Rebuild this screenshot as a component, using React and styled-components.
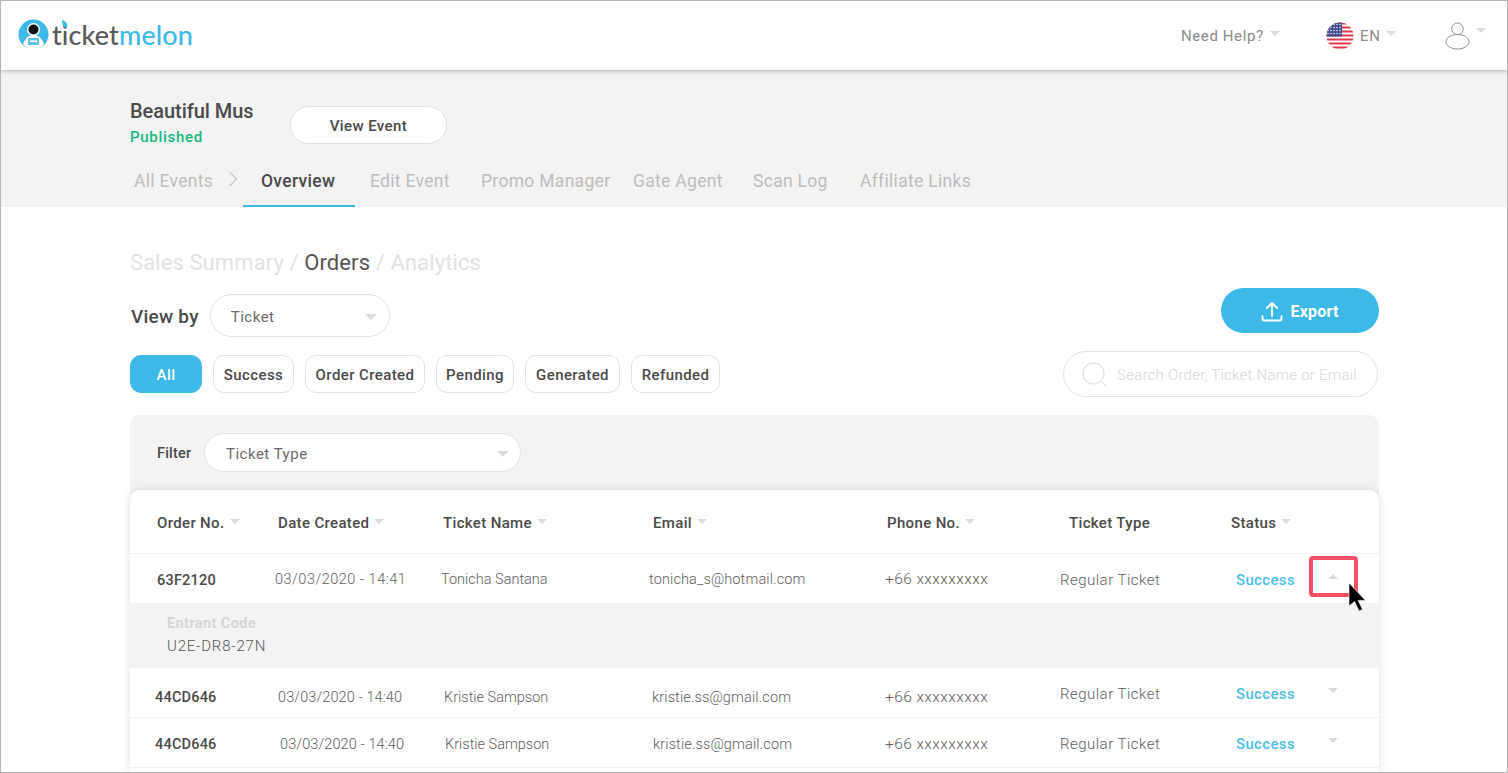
import React from "react";
import styled, { createGlobalStyle } from "styled-components";

const Global = createGlobalStyle`
  html, body { margin: 0; padding: 0; background: #fff; overflow: hidden; }
  * { box-sizing: border-box; }
  body { font-family: Roboto, "Noto Sans", Arial, sans-serif; color: #4a4a4a; }
`;

const Frame = styled.div`
  width: 1508px; height: 773px; border: 1px solid #b5b5b5; overflow: hidden; background: #fff; display: flex; flex-direction: column;
`;
const Header = styled.header`
  height: 69px; flex: none; display: flex; align-items: center; justify-content: space-between;
  padding: 0 21px 0 17px; background: #fff; box-shadow: 0 1px 4px rgba(0,0,0,.28); position: relative; z-index: 2;
`;
const LogoWrap = styled.div` display: flex; align-items: center; gap: 3px; position: relative; top: -1px; `;
const LogoText = styled.div`
  font-family: Lato, "Open Sans", sans-serif; font-size: 27px; font-weight: 500; color: #58595b; letter-spacing: .1px; position: relative; line-height: 30px;
  span { color: #3cb9e6; }
`;
const LeafDot = styled.svg` position: absolute; left: 9px; top: 0; `;
const HeaderRight = styled.div` display: flex; align-items: center; `;
const HeaderItem = styled.div`
  display: flex; align-items: center; gap: ${p => p.$gap || 6}px; width: ${p => p.$w}px; font-size: 15px; color: #8c8c8c; letter-spacing: .6px;
`;
const Caret = styled.i`
  display: inline-block; flex: none; width: 0; height: 0; border-left: ${p => p.$s || 5}px solid transparent; border-right: ${p => p.$s || 5}px solid transparent;
  ${p => p.$up ? "border-bottom" : "border-top"}: ${p => p.$s || 5}px solid ${p => p.$c || "#dcdcdc"};
  position: relative; top: ${p => p.$t || 0}px;
`;
const Band = styled.section` height: 137px; flex: none; background: #f3f3f3; padding: 27px 0 0 129px; `;
const TitleRow = styled.div` display: flex; align-items: flex-start; gap: 36px; height: 51px; `;
const TitleCol = styled.div` display: flex; flex-direction: column; gap: 1px; width: 124px; `;
const EventName = styled.div` font-size: 20px; font-weight: 500; color: #4a4a4a; line-height: 28px; letter-spacing: -.05px; `;
const Published = styled.div` font-size: 15px; font-weight: 500; color: #12b981; line-height: 22px; letter-spacing: .7px; `;
const ViewButton = styled.button`
  width: 157px; height: 38px; margin-top: 9px; padding: 2px 0 0; border-radius: 19px; background: #fff; border: 1px solid #e1e1e1; font: 500 15px Roboto, sans-serif; color: #4a4a4a; letter-spacing: .4px;
`;
const Nav = styled.nav` display: flex; align-items: center; height: 36px; margin-top: 23px; padding-left: 4px; `;
const Tab = styled.div`
  width: ${p => p.$w}px; flex: none; height: 36px; font-size: 17.5px; line-height: 25px; letter-spacing: .3px;
  color: ${p => p.$active ? "#4a4a4a" : "#bdbdbd"}; font-weight: ${p => p.$active ? 500 : 400};
  padding-left: ${p => p.$pl || 0}px; white-space: nowrap; display: flex; align-items: center;
  ${p => p.$active ? "border-bottom: 2px solid #3cb9e6; padding-bottom: 14px;" : "padding-bottom: 16px;"}
`;
const Chevron = styled.svg` flex: none; margin-right: 5px; position: relative; top: -10px; `;
const Content = styled.main` flex: 1; padding: 0 128px 0 129px; min-height: 0; `;
const Breadcrumb = styled.div` margin-top: 42px; height: 28px; font-size: 22px; line-height: 28px; color: #e2e2e2; letter-spacing: .1px; span { color: #555; } `;
const Toolbar = styled.div` display: flex; justify-content: space-between; `;
const ToolLeft = styled.div` display: flex; flex-direction: column; padding-top: 17px; `;
const ToolRight = styled.div` display: flex; flex-direction: column; align-items: flex-end; padding-top: 11px; `;
const ViewRow = styled.div` display: flex; align-items: center; gap: 11px; height: 43px; `;
const ViewLabel = styled.div` font-size: 19px; font-weight: 500; letter-spacing: .25px; color: #4a4a4a; margin-left: 1px; padding-top: 1px; `;
const Select = styled.div`
  width: ${p => p.$w}px; height: ${p => p.$h}px; border: 1px solid #e3e3e3; border-radius: ${p => p.$h / 2}px; background: #fff;
  display: flex; align-items: center; justify-content: space-between; padding: 2px ${p => p.$pr}px 0 ${p => p.$pl}px;
  font-size: 15px; color: #6a6a6a; letter-spacing: .5px;
`;
const Chips = styled.div` display: flex; gap: 11px; margin-top: 18px; `;
const Chip = styled.div`
  width: ${p => p.$w}px; height: 38px; padding-top: 2px; border-radius: 11px; display: flex; align-items: center; justify-content: center; font-size: 15px; font-weight: 500; letter-spacing: .4px;
  background: ${p => p.$active ? "#3cb9e6" : "#fff"}; color: ${p => p.$active ? "#fff" : "#4a4a4a"}; border: 1px solid ${p => p.$active ? "#3cb9e6" : "#e3e3e3"};
`;
const ExportButton = styled.button`
  width: 158px; height: 45px; border: 0; border-radius: 23px; background: #3cb9e6; color: #fff; font: 700 16px Roboto, sans-serif; letter-spacing: .2px; padding: 2px 0 0;
  display: flex; align-items: center; justify-content: center; gap: 7px;
`;
const Search = styled.div`
  width: 315px; height: 46px; margin-top: 18px; margin-right: 1px; border: 1px solid #e3e3e3; border-radius: 23px; display: flex; align-items: center; gap: 9px; padding: 2px 0 0 18px;
  font-size: 15px; color: #d6d6d6; letter-spacing: .25px; white-space: nowrap; font-weight: 300;
`;
const Panel = styled.section` margin-top: 18px; background: #f3f3f3; border-radius: 10px 10px 0 0; `;
const FilterRow = styled.div` display: flex; align-items: center; height: 75px; padding: 0 0 0 27px; `;
const FilterLabel = styled.div` width: 47px; font-size: 14.5px; font-weight: 500; letter-spacing: .2px; padding-top: 2px; `;
const Card = styled.div` background: #fff; border-radius: 10px 10px 0 0; box-shadow: 0 0 8px rgba(0,0,0,.12); min-height: 340px; `;
const HeadRow = styled.div`
  display: grid; grid-template-columns: ${p => p.$cols}; height: 64px; align-items: center; border-bottom: 1px solid #f0f0f0; padding-left: 27px; padding-top: 2px;
`;
const HeadCell = styled.div` display: flex; align-items: center; gap: 5px; font-size: 15px; font-weight: 500; letter-spacing: .35px; color: #4a4a4a; white-space: nowrap; `;
const Row = styled.div`
  display: grid; grid-template-columns: ${p => p.$cols}; height: ${p => p.$h || 49}px; align-items: center; padding-left: ${p => p.$pl}px; border-bottom: ${p => p.$line ? "1px solid #f0f0f0" : "0"};
`;
const Cell = styled.div`
  font-size: ${p => p.$fs || 14.5}px; letter-spacing: ${p => p.$ls ?? .2}px; color: #5e5e5e; white-space: nowrap; font-weight: 300; position: relative; top: ${p => p.$t || 0}px;
`;
const OrderCell = styled(Cell)` font-weight: 500; color: #4a4a4a; `;
const StatusCell = styled.div` font-size: 15px; font-weight: 500; color: #4dbdea; letter-spacing: .35px; position: relative; top: ${p => p.$t || 0}px; `;
const CaretCell = styled.div` position: relative; display: flex; padding-left: 19px; top: ${p => p.$t || 0}px; `;
const Annotation = styled.div`
  position: absolute; left: 0; top: -18px; width: 49px; height: 41px; border: 4px solid #f54f66; border-radius: 4px; pointer-events: none;
`;
const Pointer = styled.svg` position: absolute; left: 39px; top: 8px; z-index: 3; `;
const Expanded = styled.div` height: 65px; background: #f3f3f3; padding: 12px 0 0 37px; `;
const ExpandedLabel = styled.div` font-size: 14.5px; font-weight: 700; color: #d6d6d6; line-height: 18px; letter-spacing: .4px; `;
const ExpandedValue = styled.div` font-size: 15px; font-weight: 300; color: #555; line-height: 26px; letter-spacing: .8px; `;

const Logo = () => (
  <LogoWrap>
    <svg width="31" height="31" viewBox="0 0 31 31">
      <circle cx="15.5" cy="15.5" r="15" fill="#3cb9e6" />
      <path d="M5 25c3-7 6-9 10.500-9S23 18 26 25c-3 4-6.500 6-10.500 6S8 29 5 25z" fill="#fff" />
      <circle cx="15.500" cy="10.500" r="6.500" fill="#fff" />
      <circle cx="15.500" cy="10.500" r="5" fill="#111" />
      <rect x="10" y="19" width="11" height="7" rx="1" fill="#5cc4ea" />
      <rect x="12" y="21.500" width="7" height="1.500" fill="#fff" />
    </svg>
    <LogoText>
      ticket<span>melon</span>
      <LeafDot width="8" height="9" viewBox="0 0 8 9"><path d="M1 0c4 1 6 4 5 8C3 8 1 5 1 0z" fill="#3cb9e6" /></LeafDot>
    </LogoText>
  </LogoWrap>
);

const Flag = () => (
  <svg width="28" height="28" viewBox="0 0 28 28">
    <defs><clipPath id="flagClip"><circle cx="14" cy="14" r="13.500" /></clipPath></defs>
    <g clipPath="url(#flagClip)">
      <rect width="28" height="28" fill="#fff" />
      {[0, 4, 8, 12, 16, 20, 24].map(y => <rect key={y} y={y + .5} width="28" height="2" fill="#e0394a" />)}
      <rect width="16" height="14.500" fill="#454e8c" />
      {[2.500, 5.500, 8.500, 11.500].map(y => [2, 5, 8, 11, 14].map(x => <circle key={`${x}-${y}`} cx={x} cy={y} r=".7" fill="#fff" />))}
    </g>
  </svg>
);

const User = () => (
  <svg width="26" height="28" viewBox="0 0 26 28" fill="none" stroke="#8f8f8f" strokeWidth="1">
    <circle cx="13" cy="6.500" r="6" />
    <path d="M13 12.500c7 0 12 3.400 12 7.500 0 4-5 7.500-12 7.500S1 24 1 20c0-4.100 5-7.500 12-7.500z" />
  </svg>
);

const CURSOR = (
  <Pointer width="19" height="30" viewBox="0 0 19 30">
    <path d="M1 1v23l5.500-4.500L11 29l3.500-1.600-4.300-9h7.300z" fill="#000" stroke="#fff" strokeWidth=".6" />
  </Pointer>
);

const headCols = "121px 165px 210px 234px 182px 162px 1fr";
const heads = [["Order No.", 1], ["Date Created", 1], ["Ticket Name", 1], ["Email", 1], ["Phone No.", 1], ["Ticket Type", 0], ["Status", 1]];
const rows = [
  { pl: 27, cols: "118px 166px 208px 236px 175px 176px 73px 1fr", ot: 2, t: 1, rt: 1, caretT: -2, open: true, dateLs: .5, cells: ["63F2120", "03/03/2020 - 14:41", "Tonicha Santana", "tonicha_s@hotmail.com", "+66 xxxxxxxxx", "Regular Ticket"], h: 49, line: false },
  { pl: 25, cols: "123px 166px 208px 233px 175px 176px 73px 1fr", ot: 5, t: 5, rt: 1, caretT: -2, dateLs: .1, cells: ["44CD646", "03/03/2020 - 14:40", "Kristie Sampson", "kristie.ss@gmail.com", "+66 xxxxxxxxx", "Regular Ticket"], h: 50, line: true },
  { pl: 25, cols: "125px 165px 208px 232px 175px 176px 73px 1fr", ot: 2, t: 2, rt: 1, caretT: -2, dateLs: .1, cells: ["44CD646", "03/03/2020 - 14:40", "Kristie Sampson", "kristie.ss@gmail.com", "+66 xxxxxxxxx", "Regular Ticket"], h: 50, line: true },
];
const colStyle = [{}, { ls: 0 }, { ls: .13 }, { ls: .42, fs: 15.5, dy: -1 }, { ls: .48, fs: 15 }];

const tabs = [["All Events", 94], ["Overview", 112, true], ["Edit Event", 126, false, 15], ["Promo Manager", 152], ["Gate Agent", 120], ["Scan Log", 107], ["Affiliate Links", 130]];
const chips = [["All", 72, true], ["Success", 81], ["Order Created", 120], ["Pending", 78], ["Generated", 95], ["Refunded", 89]];

export default function App() {
  return (
    <Frame>
      <Global />
      <Header>
        <Logo />
        <HeaderRight>
          <HeaderItem $w={145}>Need Help?<Caret $t={-2} /></HeaderItem>
          <HeaderItem $w={119}><Flag />EN<Caret $t={-2} /></HeaderItem>
          <HeaderItem $w={41}><User /><Caret $t={-5} /></HeaderItem>
        </HeaderRight>
      </Header>
      <Band>
        <TitleRow>
          <TitleCol>
            <EventName>Beautiful Mus</EventName>
            <Published>Published</Published>
          </TitleCol>
          <ViewButton>View Event</ViewButton>
        </TitleRow>
        <Nav>
          {tabs.map(([label, w, active, pl], i) => (
            <React.Fragment key={label}>
              <Tab $w={w} $active={active} $pl={active ? 18 : pl}>{label}</Tab>
              {i === 0 && (
                <Chevron width="10" height="16" viewBox="0 0 10 16" fill="none" stroke="#a8a8a8" strokeWidth="1">
                  <path d="M1.500 1l7 7-7 7" />
                </Chevron>
              )}
            </React.Fragment>
          ))}
        </Nav>
      </Band>
      <Content>
        <Breadcrumb>Sales Summary / <span>Orders</span> / Analytics</Breadcrumb>
        <Toolbar>
          <ToolLeft>
            <ViewRow>
              <ViewLabel>View by</ViewLabel>
              <Select $w={180} $h={43} $pl={20} $pr={12}>Ticket<Caret $s={6} /></Select>
            </ViewRow>
            <Chips>
              {chips.map(([label, w, active]) => <Chip key={label} $w={w} $active={active}>{label}</Chip>)}
            </Chips>
          </ToolLeft>
          <ToolRight>
            <ExportButton>
              <svg width="22" height="22" viewBox="0 0 22 22" fill="none" stroke="#fff" strokeWidth="1.800" strokeLinecap="round" strokeLinejoin="round">
                <path d="M11 15V2M6 7l5-5 5 5M1.500 15v2.500a2 2 0 0 0 2 2h15a2 2 0 0 0 2-2V15" />
              </svg>
              Export
            </ExportButton>
            <Search>
              <svg width="26" height="26" viewBox="0 0 26 26" fill="none" stroke="#e2e0dc" strokeWidth="1.200">
                <circle cx="11.500" cy="11.500" r="10.500" />
                <path d="M19 19l5 5" />
              </svg>
              Search Order, Ticket Name or Email
            </Search>
          </ToolRight>
        </Toolbar>
        <Panel>
          <FilterRow>
            <FilterLabel>Filter</FilterLabel>
            <Select $w={317} $h={39} $pl={21} $pr={11}>Ticket Type<Caret $s={6} /></Select>
          </FilterRow>
          <Card>
            <HeadRow $cols={headCols}>
              {heads.map(([label, sort]) => <HeadCell key={label}>{label}{sort ? <Caret $t={-1} /> : null}</HeadCell>)}
            </HeadRow>
            {rows.map((r, i) => (
              <React.Fragment key={i}>
                <Row $cols={r.cols} $pl={r.pl} $h={r.h} $line={r.line}>
                  <OrderCell $t={r.ot}>{r.cells[0]}</OrderCell>
                  {r.cells.slice(1).map((c, j) => (
                    <Cell key={j} $t={(j === 4 ? r.rt : r.t) + (colStyle[j].dy || 0)} $ls={j === 0 ? r.dateLs : colStyle[j].ls} $fs={colStyle[j].fs}>{c}</Cell>
                  ))}
                  <StatusCell $t={r.rt}>Success</StatusCell>
                  <CaretCell $t={r.caretT}>
                    <Caret $up={r.open} />
                    {r.open && <><Annotation />{CURSOR}</>}
                  </CaretCell>
                </Row>
                {r.open && (
                  <Expanded>
                    <ExpandedLabel>Entrant Code</ExpandedLabel>
                    <ExpandedValue>U2E-DR8-27N</ExpandedValue>
                  </Expanded>
                )}
              </React.Fragment>
            ))}
          </Card>
        </Panel>
      </Content>
    </Frame>
  );
}
